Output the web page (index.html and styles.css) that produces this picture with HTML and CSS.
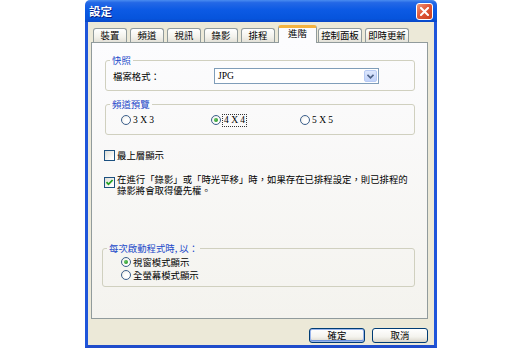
FILE: index.html
```html
<!DOCTYPE html>
<html>
<head>
<meta charset="utf-8">
<title>設定</title>
<link rel="stylesheet" href="styles.css">
</head>
<body>
<div class="window">
  <div class="titlebar">
    <span class="title">設定</span>
    <div class="close">
      <svg width="9" height="9" viewBox="0 0 9 9"><path d="M1 1 L8 8 M8 1 L1 8" stroke="#fff" stroke-width="2" stroke-linecap="square"/></svg>
    </div>
  </div>
  <div class="frame">
    <div class="tabs">
      <div class="tab">裝置</div>
      <div class="tab">頻道</div>
      <div class="tab">視訊</div>
      <div class="tab">錄影</div>
      <div class="tab">排程</div>
      <div class="tab tab-active">進階</div>
      <div class="tab tab-wide">控制面板</div>
      <div class="tab tab-wide">即時更新</div>
    </div>
    <div class="panel">
      <fieldset class="group group-snap">
        <legend>快照</legend>
        <div class="snap-row">
          <span class="label">檔案格式：</span>
          <div class="select">
            <span class="select-value">JPG</span>
            <div class="drop">
              <svg width="7" height="5" viewBox="0 0 7 5"><path d="M0.5 0.8 L3.5 3.8 L6.5 0.8" fill="none" stroke="#4D6185" stroke-width="1.6"/></svg>
            </div>
          </div>
        </div>
      </fieldset>
      <fieldset class="group group-preview">
        <legend>頻道預覽</legend>
        <div class="grid-radios">
          <div class="radio-item"><span class="radio"></span><span class="latin">3 X 3</span></div>
          <div class="radio-item"><span class="radio radio-on"></span><span class="latin focus">4 X 4</span></div>
          <div class="radio-item"><span class="radio"></span><span class="latin">5 X 5</span></div>
        </div>
      </fieldset>
      <div class="check check-top">
        <span class="box"></span>
        <span>最上層顯示</span>
      </div>
      <div class="check check-multi">
        <span class="box box-on">
          <svg width="9" height="9" viewBox="0 0 9 9"><path d="M1.5 4.2 L3.5 6.3 L7.6 2" fill="none" stroke="#21A121" stroke-width="1.8"/></svg>
        </span>
        <span class="multi-text">在進行「錄影」或「時光平移」時，如果存在已排程設定，則已排程的<br>錄影將會取得優先權。</span>
      </div>
      <fieldset class="group group-start">
        <legend>每次啟動程式時, 以：</legend>
        <div class="start-list">
          <div class="radio-item"><span class="radio radio-on"></span><span>視窗模式顯示</span></div>
          <div class="radio-item"><span class="radio"></span><span>全螢幕模式顯示</span></div>
        </div>
      </fieldset>
    </div>
    <div class="buttons">
      <button class="btn btn-default">確定</button>
      <button class="btn">取消</button>
    </div>
  </div>
</div>
</body>
</html>
```
FILE: styles.css
```css
* { box-sizing: border-box; }
body {
  margin: 0;
  background: #fff;
  font-family: "Noto Sans CJK TC", "Liberation Sans", sans-serif;
  font-size: 9.4px;
  color: #000;
}
.window {
  margin-left: 85px;
  width: 352px;
  height: 348px;
  display: flex;
  flex-direction: column;
}
.titlebar {
  height: 22px;
  flex: 0 0 22px;
  background: linear-gradient(#4A8CF0 0%, #2468E6 12%, #0C5AE4 45%, #0654DC 85%, #0A47C6 100%);
  border-radius: 5px 5px 0 0;
  display: flex;
  align-items: center;
  justify-content: space-between;
  padding: 0 4px 0 4px;
}
.title {
  color: #fff;
  font-size: 11.5px;
  font-weight: bold;
  text-shadow: 1px 1px 0 #0A1E84;
}
.close {
  width: 17px;
  height: 17px;
  border: 1px solid #fff;
  border-radius: 3px;
  background: linear-gradient(135deg, #F0977B 0%, #E1583A 45%, #C8401F 100%);
  display: flex;
  align-items: center;
  justify-content: center;
}
.frame {
  flex: 1;
  background: #ECE9D8;
  border-left: 3px solid #1F55DA;
  border-right: 3px solid #1F55DA;
  border-bottom: 3px solid #1F4CCB;
  padding: 3px 6px 0 3px;
  display: flex;
  flex-direction: column;
}
.tabs {
  display: flex;
  align-items: flex-end;
  height: 17px;
  margin-left: 2px;
  gap: 3px;
  position: relative;
  z-index: 2;
}
.tab {
  width: 34px;
  height: 14px;
  border: 1px solid #919B9C;
  border-bottom: 0;
  border-radius: 3px 3px 0 0;
  background: linear-gradient(#FFFFFF, #F3F2EC 60%, #E3E1D8);
  display: flex;
  align-items: center;
  justify-content: center;
  line-height: 1;
}
.tab-wide { width: 44px; }
.tab-active {
  width: 39px;
  height: 18px;
  margin-bottom: -1px;
  margin-right: -2px;
  background: #FCFCFE;
  border-top: 3px solid #F4B23E;
  padding-bottom: 3px;
}
.panel {
  height: 277px;
  flex: 0 0 277px;
  border: 1px solid #919B9C;
  background: linear-gradient(#FCFCFE, #F4F3EE);
  padding: 11px 12px 0 13px;
  display: flex;
  flex-direction: column;
}
.group {
  margin: 0;
  border: 1px solid #D0D0BF;
  border-radius: 3px;
  padding: 0;
  min-width: 0;
}
.group legend {
  color: #1B49C9;
  padding: 0 2px;
  margin-left: 4px;
  line-height: 12px;
  height: 12px;
}
.snap-row {
  display: flex;
  align-items: center;
  height: 16px;
  margin: 2px 0 6px 7px;
}
.label { width: 101px; }
.select {
  width: 165px;
  height: 16px;
  border: 1px solid #7F9DB9;
  background: #fff;
  display: flex;
  align-items: center;
  justify-content: space-between;
  padding: 1px 1px 1px 3px;
}
.select-value, .latin {
  font-family: "Liberation Serif", serif;
  font-size: 9.5px;
}
.drop {
  width: 13px;
  height: 12px;
  border: 1px solid #B8CBF4;
  border-radius: 2px;
  background: linear-gradient(#DDE7FD, #C2D3FA);
  display: flex;
  align-items: center;
  justify-content: center;
}
.group-preview { margin-top: 7px; }
.grid-radios {
  display: grid;
  grid-template-columns: 90px 89px 90px;
  height: 12px;
  align-items: center;
  margin: 4px 0 8px 15px;
}
.radio-item {
  display: flex;
  align-items: center;
  gap: 2px;
  height: 12px;
}
.radio {
  width: 10px;
  height: 10px;
  border-radius: 50%;
  border: 1px solid #3C5F8C;
  background: radial-gradient(circle at 60% 60%, #fff 30%, #E6E6DF 100%);
  display: inline-flex;
  align-items: center;
  justify-content: center;
  flex: 0 0 10px;
}
.radio-on::after {
  content: "";
  width: 4px;
  height: 4px;
  border-radius: 50%;
  background: radial-gradient(circle at 35% 35%, #5FC65F, #1E8A1E);
}
.focus {
  outline: 1px dotted #333;
  outline-offset: 0;
  padding: 0 1px;
  line-height: 11px;
}
.check {
  display: flex;
  align-items: flex-start;
  gap: 2px;
}
.check-top {
  margin-top: 14px;
  margin-left: -1px;
  align-items: center;
  height: 12px;
}
.check-multi {
  margin-top: 13px;
  margin-left: -1px;
}
.box {
  width: 11px;
  height: 11px;
  flex: 0 0 11px;
  border: 1px solid #1C5180;
  background: linear-gradient(135deg, #DCDCD4, #FFFFFF 80%);
  display: flex;
  align-items: center;
  justify-content: center;
}
.box-on { margin-top: 3px; }
.multi-text {
  line-height: 11px;
  white-space: nowrap;
}
.group-start {
  margin-top: 46px;
  margin-left: -3px;
}
.start-list {
  display: flex;
  flex-direction: column;
  margin: 1px 0 5px 18px;
}
.start-list .radio-item { height: 13px; }
.buttons {
  display: flex;
  justify-content: flex-end;
  gap: 7px;
  margin-top: 9px;
}
.btn {
  width: 56px;
  height: 15px;
  padding: 0;
  border: 1px solid #003C74;
  border-radius: 3px;
  background: linear-gradient(#FFFFFF, #F4F3EE 60%, #D9D5C9);
  font-family: "Noto Sans CJK TC", sans-serif;
  font-size: 9.4px;
  line-height: 1;
  color: #000;
}
.btn-default {
  box-shadow: inset 0 0 0 1px #9AB5EC, inset 0 -1px 0 1px #6E95DD;
}
```
